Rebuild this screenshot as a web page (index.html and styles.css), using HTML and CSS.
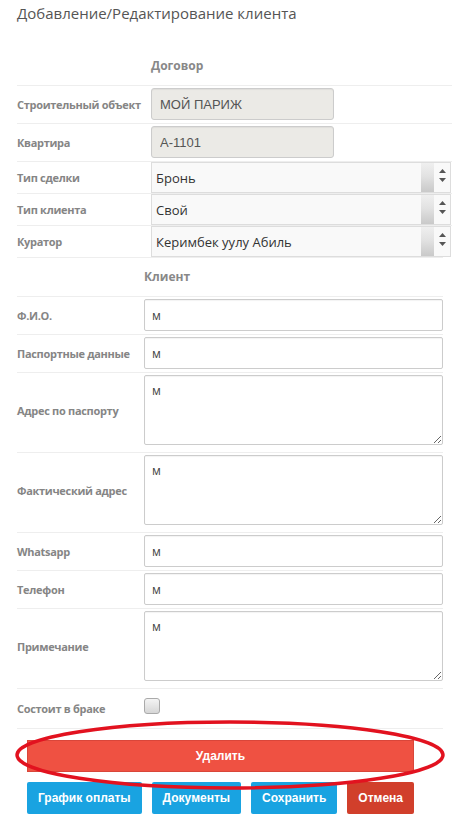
FILE: index.html
```html
<!DOCTYPE html>
<html lang="ru">
<head>
<meta charset="utf-8">
<title>Клиент</title>
<link rel="stylesheet" href="styles.css">
</head>
<body>
<div class="page">
  <h1 class="title">Добавление/Редактирование клиента</h1>

  <div class="form form-contract">
    <div class="section-head first">Договор</div>
    <div class="row">
      <label class="label">Строительный объект</label>
      <input class="input locked" value="МОЙ ПАРИЖ" disabled>
    </div>
    <div class="row">
      <label class="label">Квартира</label>
      <input class="input locked" value="А-1101" disabled>
    </div>
    <div class="row sel">
      <label class="label">Тип сделки</label>
      <div class="select"><span class="select-text">Бронь</span><span class="strip"></span><span class="arrows"><svg width="7" height="13" viewBox="0 0 7 13"><polygon points="0,4 3.5,0 7,4" fill="#555"/><polygon points="0,9 7,9 3.5,13" fill="#555"/></svg></span></div>
    </div>
    <div class="row sel">
      <label class="label">Тип клиента</label>
      <div class="select"><span class="select-text">Свой</span><span class="strip"></span><span class="arrows"><svg width="7" height="13" viewBox="0 0 7 13"><polygon points="0,4 3.5,0 7,4" fill="#555"/><polygon points="0,9 7,9 3.5,13" fill="#555"/></svg></span></div>
    </div>
    <div class="row sel">
      <label class="label">Куратор</label>
      <div class="select"><span class="select-text">Керимбек уулу Абиль</span><span class="strip"></span><span class="arrows"><svg width="7" height="13" viewBox="0 0 7 13"><polygon points="0,4 3.5,0 7,4" fill="#555"/><polygon points="0,9 7,9 3.5,13" fill="#555"/></svg></span></div>
    </div>
  </div>

  <div class="form form-client">
    <div class="section-head">Клиент</div>
    <div class="row">
      <label class="label">Ф.И.О.</label>
      <input class="input" value="м">
    </div>
    <div class="row">
      <label class="label">Паспортные данные</label>
      <input class="input" value="м">
    </div>
    <div class="row tall">
      <label class="label">Адрес по паспорту</label>
      <textarea class="textarea">м</textarea>
    </div>
    <div class="row tall">
      <label class="label">Фактический адрес</label>
      <textarea class="textarea">м</textarea>
    </div>
    <div class="row">
      <label class="label">Whatsapp</label>
      <input class="input" value="м">
    </div>
    <div class="row">
      <label class="label">Телефон</label>
      <input class="input" value="м">
    </div>
    <div class="row tall">
      <label class="label">Примечание</label>
      <textarea class="textarea">м</textarea>
    </div>
    <div class="row check-row">
      <label class="label">Состоит в браке</label>
      <input type="checkbox" class="checkbox">
    </div>

    <div class="actions">
      <button class="btn btn-delete" type="button">Удалить</button>
      <div class="btn-row">
        <button class="btn btn-blue" type="button">График оплаты</button>
        <button class="btn btn-blue" type="button">Документы</button>
        <button class="btn btn-blue" type="button">Сохранить</button>
        <button class="btn btn-cancel" type="button">Отмена</button>
      </div>
    </div>
  </div>
</div>

<svg class="annotation" width="469" height="833" viewBox="0 0 469 833">
  <ellipse cx="230" cy="755" rx="213" ry="33" fill="none" stroke="#e2121f" stroke-width="3.5"/>
</svg>
</body>
</html>
```

FILE: styles.css
```css
* {
  box-sizing: border-box;
}

html, body {
  margin: 0;
  padding: 0;
  background: #fff;
}

body {
  position: relative;
  font-family: "Open Sans", "Liberation Sans", sans-serif;
  color: #555;
}

.page {
  padding-left: 17px;
}

.title {
  margin: 0;
  padding-top: 3px;
  font-size: 15px;
  line-height: 20px;
  font-weight: 400;
  color: #555;
}

.form-contract {
  width: 435px;
}

.form-client {
  width: 426px;
}

.section-head {
  border-top: 1px solid #eee;
  padding: 10px 0 10px 127px;
  font-size: 12px;
  line-height: 18px;
  font-weight: 700;
  color: #888;
}

.section-head.first {
  border-top: 0;
  padding-top: 34px;
  padding-left: 134px;
}

.row {
  display: flex;
  align-items: center;
  border-top: 1px solid #eee;
  padding: 2px 0 3px;
}

.row.sel {
  padding: 0;
}

.row.tall {
  padding-bottom: 7px;
}

.label {
  flex: 0 0 127px;
  font-size: 11px;
  font-weight: 700;
  letter-spacing: -0.3px;
  color: #858585;
  line-height: 15px;
}

.form-contract .label {
  flex-basis: 134px;
}

.input {
  display: block;
  width: 299px;
  height: 32px;
  margin: 0;
  padding: 0 7px;
  border: 1px solid #ccc;
  border-radius: 2px;
  background: #fff;
  box-shadow: inset 0 1px 1px rgba(0, 0, 0, 0.05);
  font-family: "Open Sans", sans-serif;
  font-size: 12px;
  color: #444;
  outline: none;
}

.input.locked {
  width: 183px;
  padding: 0 8px;
  background: #ebeae6;
  border-color: #ccc;
  border-radius: 3px;
  font-family: "Liberation Sans", Arial, sans-serif;
  font-size: 13px;
  color: #555;
  -webkit-text-fill-color: #555;
  opacity: 1;
}

.select {
  display: flex;
  align-items: stretch;
  width: 300px;
  height: 31px;
  border: 1px solid #ddd;
  background: #f9f9f9;
}

.select-text {
  flex: 1;
  display: flex;
  align-items: center;
  padding-left: 4px;
  font-size: 13px;
  color: #333;
}

.strip {
  flex: 0 0 13px;
  background: linear-gradient(#efefef, #e2e2e2 45%, #c9c9c9);
}

.arrows {
  flex: 0 0 16px;
  display: flex;
  align-items: flex-start;
  justify-content: center;
  padding-top: 6px;
}

.arrows svg {
  display: block;
}

.textarea {
  display: block;
  width: 299px;
  height: 70px;
  margin: 0;
  padding: 6px 7px;
  border: 1px solid #ccc;
  border-radius: 2px;
  background: #fff;
  box-shadow: inset 0 1px 1px rgba(0, 0, 0, 0.05);
  font-family: "Open Sans", sans-serif;
  font-size: 12px;
  line-height: 17px;
  color: #444;
  outline: none;
}

.check-row {
  height: 40px;
  padding: 0;
}

.checkbox {
  -webkit-appearance: none;
  appearance: none;
  display: block;
  width: 16px;
  height: 16px;
  margin: 0 0 6px 0;
  border: 1px solid #aaa;
  border-radius: 3px;
  background: linear-gradient(#f4f4f4, #d6d6d6);
}

.actions {
  border-top: 1px solid #eee;
  padding: 11px 0 0 10px;
}

.btn {
  display: block;
  height: 32px;
  margin: 0;
  padding: 0 11px;
  border: 0;
  border-radius: 2px;
  font-family: "Liberation Sans", Arial, sans-serif;
  font-size: 12px;
  font-weight: 700;
  color: #fff;
  cursor: pointer;
}

.btn-delete {
  width: 387px;
  background: #ef5142;
  border: 1px solid #d9463a;
  border-radius: 0;
}

.btn-row {
  display: flex;
  gap: 10px;
  margin-top: 10px;
}

.btn-blue {
  background: #19a3e1;
}

.btn-cancel {
  background: #d13f2b;
}

.annotation {
  position: absolute;
  left: 0;
  top: 0;
  pointer-events: none;
}
```
